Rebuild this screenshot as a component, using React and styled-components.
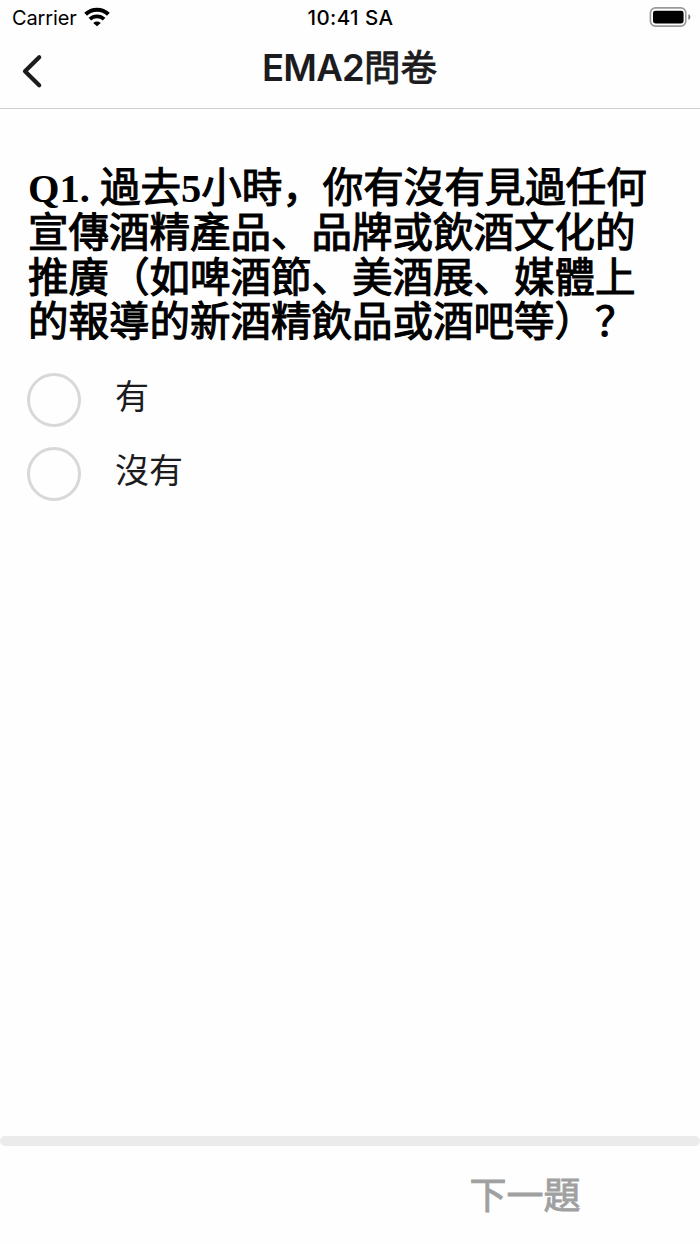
import { useState } from "react";
import styled, { createGlobalStyle } from "styled-components";

const lines = [
    "Q1. 過去5小時，你有沒有見過任何",
    "宣傳酒精產品、品牌或飲酒文化的",
    "推廣（如啤酒節、美酒展、媒體上",
    "的報導的新酒精飲品或酒吧等）？"
]

const options = ["有", "沒有"]

// latin and chinese parts of a line have different weights
const splitLine = (line) => line.match(/[\x00-\x7f]+|[^\x00-\x7f]+/g)

const App = () => {
    const [answer, setAnswer] = useState(null)

    return <Page>
        <Global />
        <StatusBar>
            <Carrier>
                Carrier
                <svg width="26" height="20" viewBox="0 0 26 20" fill="none" stroke="#000" strokeWidth="4">
                    <path d="M1.6 7.3 A16.4 16.4 0 0 1 24.4 7.3" />
                    <path d="M5.9 12.2 A10.2 10.2 0 0 1 20.1 12.2" strokeWidth="3.8" />
                    <path d="M13 19.2 L9.2 15.9 Q13 13 16.8 15.9 Z" fill="#000" stroke="none" />
                </svg>
            </Carrier>
            <Time>10:41 SA</Time>
            <Battery>
                <svg width="42" height="20" viewBox="0 0 42 20">
                    <rect x="1.4" y="0.9" width="35.4" height="18.2" rx="5" fill="none" stroke="#999" strokeWidth="1.6" />
                    <rect x="4" y="3.7" width="30.6" height="12.8" rx="2.4" fill="#000" />
                    <path d="M39.4 7 Q41.4 8 41.4 10 Q41.4 12 39.4 13 Z" fill="#777" />
                </svg>
            </Battery>
        </StatusBar>

        <Header>
            <Back aria-label="back">
                <svg width="22" height="36" viewBox="0 0 22 36" fill="none" stroke="#1c1c1e" strokeWidth="4.2" strokeLinecap="round" strokeLinejoin="round">
                    <path d="M18.2 3.2 L4 17.2 L18.2 31.2" />
                </svg>
            </Back>
            <Title>EMA2<Han $stroke={0.9}>問卷</Han></Title>
        </Header>

        <Content>
            <Question>
                {lines.map((line) => (
                    <Line key={line}>
                        {splitLine(line).map((part, i) => (
                            part.charCodeAt(0) > 127
                                ? <Han key={i} $stroke={1.1}>{part}</Han>
                                : <span key={i}>{part}</span>
                        ))}
                    </Line>
                ))}
            </Question>
            {options.map((item) => (
                <Option key={item} onClick={() => setAnswer(item)}>
                    <Radio $checked={answer === item} />
                    <Label>{item}</Label>
                </Option>
            ))}
        </Content>

        <Progress />
        <Footer>
            <Next disabled={answer === null}><Han $stroke={0.9}>下一題</Han></Next>
        </Footer>
    </Page>
}

export default App

const Global = createGlobalStyle`
body{
    margin: 0;
    background-color: #fff;
}
`

const Page = styled.div`
display: flex;
flex-direction: column;
width: 100%;
height: 1244px;
overflow: hidden;
background-color: #fefefe;
color: #1c1c1e;
font-family: Inter, "Noto Sans CJK TC", sans-serif;
`

const Han = styled.span`
font-weight: 400;
-webkit-text-stroke: ${(props) => props.$stroke}px currentColor;
`

const StatusBar = styled.div`
display: grid;
grid-template-columns: 1fr auto 1fr;
align-items: center;
height: 36px;
padding: 0 9px 0 12px;
color: #000;
font-size: 20px;
`

const Carrier = styled.div`
display: flex;
align-items: center;
gap: 7px;
letter-spacing: -0.12px;
svg{
    margin-top: -2px;
}
`

const Time = styled.div`
margin-right: 2px;
padding-bottom: 1px;
font-weight: 500;
font-size: 20.5px;
letter-spacing: 0.45px;
`

const Battery = styled.div`
display: flex;
justify-content: flex-end;
margin-top: -2px;
`

const Header = styled.header`
display: grid;
grid-template-columns: 60px 1fr 60px;
align-items: center;
box-sizing: border-box;
height: 73px;
border-bottom: 1px solid #d0d0d0;
`

const Back = styled.button`
display: flex;
padding: 0 0 0 21px;
border: none;
background: none;
`

const Title = styled.h1`
margin: 0 1px 0 0;
padding-bottom: 8px;
text-align: center;
font-size: 36.5px;
font-weight: 600;
letter-spacing: -0.8px;
line-height: 48px;
span{
    letter-spacing: 0;
}
`

const Content = styled.main`
flex: 1;
padding: 58px 28px 0;
`

const Question = styled.h2`
margin: 0 0 27px;
color: #000;
font-family: "Liberation Serif", "Noto Sans CJK SC", serif;
font-size: 40.5px;
font-weight: bold;
line-height: 44.8px;
`

const Line = styled.span`
display: block;
white-space: nowrap;
`

const Option = styled.div`
display: flex;
align-items: center;
height: 54px;
margin-bottom: 20px;
`

const Radio = styled.span`
box-sizing: border-box;
width: 54px;
height: 54px;
margin-left: -1px;
border: 3px solid #d8d8d8;
border-radius: 50%;
background-color: ${(props) => props.$checked ? "#d8d8d8" : "transparent"};
`

const Label = styled.span`
margin-left: 34px;
padding-bottom: 6px;
font-size: 34px;
line-height: 48px;
`

const Progress = styled.div`
height: 10px;
border-radius: 5px;
background-color: #ebebeb;
`

const Footer = styled.footer`
display: flex;
justify-content: flex-end;
box-sizing: border-box;
height: 98px;
`

const Next = styled.button`
width: 350px;
padding: 0 0 4px;
border: none;
background: none;
color: #a0a0a0;
font-family: inherit;
font-size: 37px;
`
